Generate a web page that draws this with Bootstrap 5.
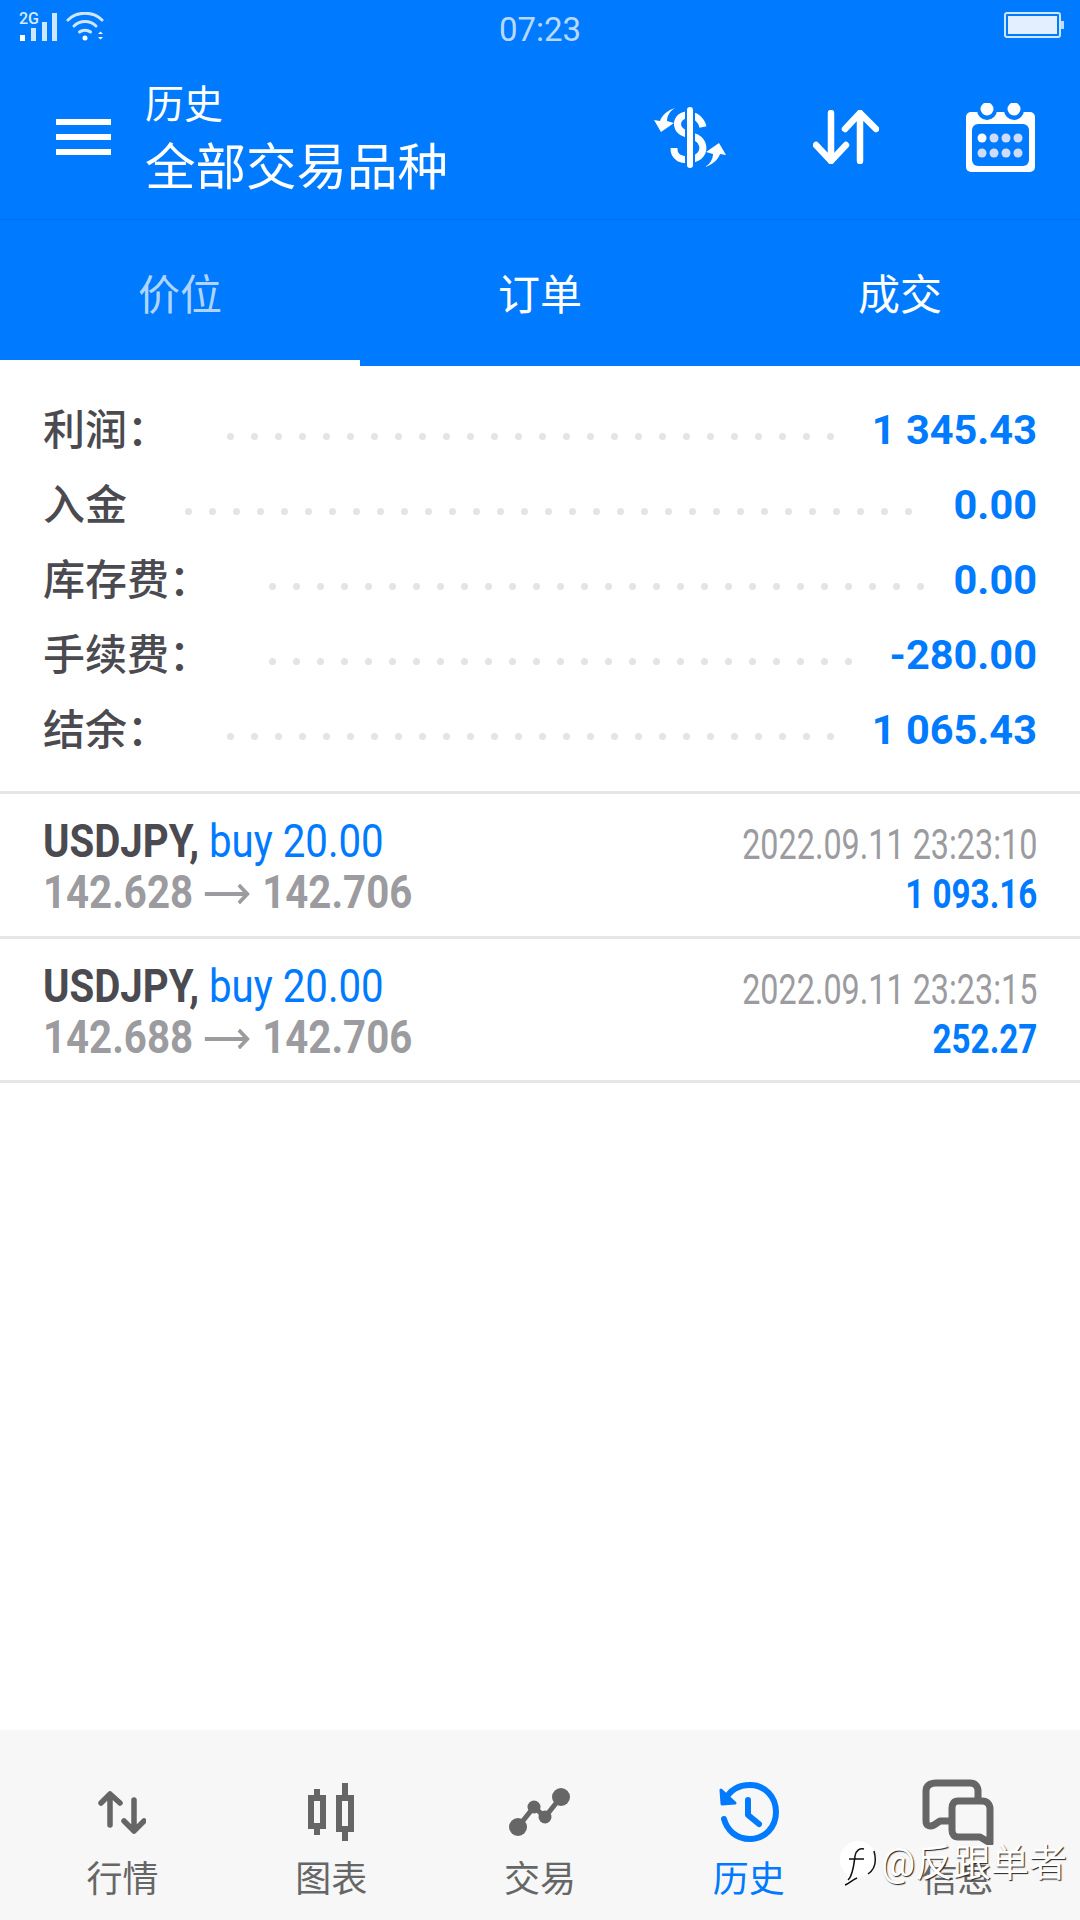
<!DOCTYPE html>
<html lang="zh-CN">
<head>
    <meta charset="UTF-8">
    <meta name="viewport" content="width=device-width, initial-scale=1.0">
    <title>历史</title>
    <link href="https://cdn.jsdelivr.net/npm/bootstrap@5.3.0/dist/css/bootstrap.min.css" rel="stylesheet">
    <style>
        body {
            width: 1080px;
            min-height: 1920px;
            font-family: Roboto, "Noto Sans CJK SC", sans-serif;
            color: #4a4a50;
            background: #fff;
        }
        .top-area { background: #007aff; color: #fff; }
        .status-line { height: 60px; padding: 12px 16px 0 18px; }
        .signal-icon { margin-top: -4px; }
        .clock-text { font-size: 33px; line-height: 36px; color: rgba(255, 255, 255, .72); }
        .app-line { height: 160px; padding-left: 56px; padding-bottom: 5px; border-bottom: 1px solid #0070ea; }
        .burger-bars { width: 55px; height: 36px; margin-right: 34px; }
        .burger-bars span { display: block; height: 6px; background: #fff; }
        .title-box { padding-top: 8px; }
        .title-small { font-size: 39px; line-height: 44px; }
        .title-big { font-size: 50.500px; line-height: 62px; margin-top: 10px; }
        .act-swap { margin-left: 87px; }
        .act-cal { margin: 0 45px 0 87px; }
        .tab-line { height: 146px; }
        .tab-line .nav-link {
            color: #fff;
            font-size: 42px;
            line-height: 50px;
            height: 146px;
            padding: 51px 0 0;
            border-bottom: 6px solid transparent;
        }
        .tab-line .nav-link.is-current { color: rgba(255, 255, 255, .7); border-bottom-color: #fff; }
        .sum-box { padding: 27px 43px 23px; }
        .sum-row { height: 75px; }
        .sum-label { font-size: 42px; font-weight: 500; color: #4a4a50; line-height: 75px; white-space: nowrap; }
        .sum-dots { display: flex; gap: 17px; margin-left: 58px; padding-top: 12px; }
        .sum-dots i { width: 7px; height: 7px; border-radius: 50%; background: #e4e4e6; }
        .sum-value { font-size: 41.500px; font-weight: 700; color: #007aff; line-height: 75px; margin-top: -2px; }
        .deal-row {
            height: 144.500px;
            padding: 0 43px;
            border-top: 3px solid #e6e6e6;
        }
        .deal-list { border-bottom: 3px solid #e6e6e6; }
        .squeeze-l, .squeeze-r { display: block; white-space: nowrap; }
        .squeeze-l { transform: scaleX(.855); transform-origin: left center; }
        .squeeze-r { transform: scaleX(.77); transform-origin: right center; text-align: right; }
        .deal-main { font-size: 47px; line-height: 51px; font-weight: 700; color: #4a4a50; }
        .deal-main em { font-style: normal; font-weight: 400; color: #007aff; }
        .deal-price { color: #9b9ba0; }
        .deal-arrow { margin: 0 14px; vertical-align: 4px; }
        .deal-date { font-size: 42px; line-height: 48px; color: #9b9ba0; margin-top: 10px; }
        .deal-money { font-size: 40px; line-height: 50px; font-weight: 700; color: #007aff; margin-top: 1px; }
        .deal-money.squeeze-r { transform: scaleX(.83); }
        .deal-left { padding-top: 21px; }
        .deal-right { padding-top: 17px; }
        .tab-bar {
            height: 190px;
            padding: 49px 18px 0;
            background: #f7f7f7;
            position: relative;
        }
        .tab-cell { width: 209px; color: #666; font-size: 36px; line-height: 44px; }
        .tab-cell.on { color: #007aff; }
        .tab-icon { height: 66px; margin-bottom: 13px; }
        .mark-box {
            position: absolute;
            left: 839px;
            top: 110px;
            height: 46px;
            color: #fff;
            font-size: 38px;
            line-height: 46px;
            text-shadow: 1px 1px 1px #222;
            white-space: nowrap;
        }
    </style>
</head>
<body class="d-flex flex-column">
    <div class="top-area">
        <div class="status-line d-flex align-items-start position-relative">
            <svg class="signal-icon" width="40" height="34" viewBox="0 -4 40 34">
                <text x="1" y="12" font-family="Roboto" font-size="16" font-weight="500" fill="#dcecff">2G</text>
                <rect x="2" y="23" width="5" height="6" fill="#fff"/>
                <rect x="13" y="16" width="5" height="13" fill="#cfe6ff"/>
                <rect x="24" y="10" width="5" height="19" fill="#cfe6ff"/>
                <rect x="34" y="1" width="5" height="28" fill="#cfe6ff"/>
            </svg>
            <svg class="ms-2" width="40" height="30" viewBox="0 0 40 30" fill="none" stroke="#cfe6ff" stroke-width="3" stroke-linecap="round">
                <path d="M2 8C11 -1 27 -1 36 8"/>
                <path d="M8 14C14 8 24 8 30 14"/>
                <path d="M13.500 20C16.500 17.500 21.500 17.500 24.500 20"/>
                <circle cx="19" cy="26" r="2.500" fill="#fff" stroke="none"/>
                <path d="M32 22l2.500-2.500 2.500 2.500zM32 25l2.500 2.500 2.500-2.500z" fill="#fff" stroke="none"/>
            </svg>
            <div class="clock-text position-absolute top-50 start-50 translate-middle">07:23</div>
            <svg class="ms-auto" width="60" height="26" viewBox="0 0 60 26">
                <rect x="1" y="1" width="55" height="24" rx="2" fill="none" stroke="#cfe6ff" stroke-width="2"/>
                <rect x="4" y="4" width="49" height="18" fill="#e3efff"/>
                <rect x="57" y="9" width="3" height="8" fill="#bcdcff"/>
            </svg>
        </div>
        <div class="app-line d-flex align-items-center">
            <div class="burger-bars d-flex flex-column justify-content-between"><span></span><span></span><span></span></div>
            <div class="title-box flex-grow-1">
                <div class="title-small">历史</div>
                <div class="title-big">全部交易品种</div>
            </div>
            <svg width="72" height="61" viewBox="0 0 72 61">
                <path d="M49 20C47 12 41 8 34 8C26 8 22 14 24 20C26 27 37 28 43 31C50 35 50 43 47 47C43 53 31 54 25 51C21 48 20 46 20 41" fill="none" stroke="#fff" stroke-width="7"/>
                <rect x="31" y="0" width="10" height="61" fill="#007aff"/>
                <rect x="33" y="0" width="6" height="61" rx="3" fill="#fff"/>
                <path d="M21 1C16 4 13 9 13 14L20 16L7 25L0 13L6 14C8 8 14 3 21 1Z" fill="#fff"/>
                <path d="M21 1C16 4 13 9 13 14L20 16L7 25L0 13L6 14C8 8 14 3 21 1Z" fill="#fff" transform="rotate(180 36 30.500)"/>
            </svg>
            <svg class="act-swap" width="66" height="54" viewBox="0 0 66 54" fill="none" stroke="#fff" stroke-width="6.500" stroke-linecap="round" stroke-linejoin="round">
                <path d="M18 3V51M3 35L18 51L33 35"/>
                <path d="M47 51V3M32 19L47 3L63 19"/>
            </svg>
            <svg class="act-cal flex-shrink-0" width="69" height="69" viewBox="0 0 69 69">
                <rect x="0" y="9" width="69" height="60" rx="5" fill="#fff"/>
                <circle cx="21" cy="7" r="10" fill="#007aff"/>
                <circle cx="48" cy="7" r="10" fill="#007aff"/>
                <circle cx="21" cy="6" r="6.500" fill="#fff"/>
                <circle cx="48" cy="6" r="6.500" fill="#fff"/>
                <rect x="6" y="21" width="57" height="42" rx="6" fill="#007aff"/>
                <g fill="#cfdcf5">
                    <circle cx="16" cy="35" r="4.500" fill="#fff"/><circle cx="28" cy="35" r="4.500"/><circle cx="40" cy="35" r="4.500"/><circle cx="52" cy="35" r="4.500"/>
                    <circle cx="16" cy="50" r="4.500"/><circle cx="28" cy="50" r="4.500"/><circle cx="40" cy="50" r="4.500"/><circle cx="52" cy="50" r="4.500"/>
                </g>
            </svg>
        </div>
        <nav class="tab-line nav nav-fill">
            <a class="nav-link is-current" href="#">价位</a>
            <a class="nav-link" href="#">订单</a>
            <a class="nav-link" href="#">成交</a>
        </nav>
    </div>

    <main class="flex-grow-1">
        <div class="sum-box" id="sumBox"></div>
        <div class="deal-list">
            <div class="deal-row d-flex justify-content-between">
                <div class="deal-left">
                    <div class="squeeze-l deal-main">USDJPY, <em>buy 20.00</em></div>
                    <div class="squeeze-l deal-main deal-price">142.628<svg class="deal-arrow" width="53" height="20" viewBox="0 0 53 20" fill="none" stroke="#9b9ba0" stroke-width="4"><path d="M0 10H50M40 1L50 10L40 19"/></svg>142.706</div>
                </div>
                <div class="deal-right">
                    <div class="squeeze-r deal-date">2022.09.11 23:23:10</div>
                    <div class="squeeze-r deal-money">1 093.16</div>
                </div>
            </div>
            <div class="deal-row d-flex justify-content-between">
                <div class="deal-left">
                    <div class="squeeze-l deal-main">USDJPY, <em>buy 20.00</em></div>
                    <div class="squeeze-l deal-main deal-price">142.688<svg class="deal-arrow" width="53" height="20" viewBox="0 0 53 20" fill="none" stroke="#9b9ba0" stroke-width="4"><path d="M0 10H50M40 1L50 10L40 19"/></svg>142.706</div>
                </div>
                <div class="deal-right">
                    <div class="squeeze-r deal-date">2022.09.11 23:23:15</div>
                    <div class="squeeze-r deal-money">252.27</div>
                </div>
            </div>
        </div>
    </main>

    <div class="tab-bar d-flex">
        <div class="tab-cell d-flex flex-column align-items-center">
            <div class="tab-icon d-flex align-items-center">
                <svg width="48" height="43" viewBox="0 0 48 43" fill="none" stroke="#666" stroke-width="5.500" stroke-linecap="round" stroke-linejoin="round">
                    <path d="M12 34V3M3 12L12 3L22 12"/>
                    <path d="M36 9V40M26 30L36 40L46 30"/>
                </svg>
            </div>
            <div>行情</div>
        </div>
        <div class="tab-cell d-flex flex-column align-items-center">
            <div class="tab-icon d-flex align-items-center">
                <svg width="47" height="58" viewBox="0 0 47 58">
                    <rect x="6" y="6" width="6" height="46" fill="#666"/>
                    <rect x="0" y="12" width="18" height="34" fill="#666"/>
                    <rect x="6" y="18" width="6" height="22" fill="#f7f7f7"/>
                    <rect x="34" y="0" width="6" height="58" fill="#666"/>
                    <rect x="28" y="12" width="18" height="37" fill="#666"/>
                    <rect x="34" y="18" width="6" height="25" fill="#f7f7f7"/>
                </svg>
            </div>
            <div>图表</div>
        </div>
        <div class="tab-cell d-flex flex-column align-items-center">
            <div class="tab-icon d-flex align-items-center">
                <svg width="61" height="48" viewBox="0 0 61 48">
                    <path d="M9 39L25 19L36 29L52 9" fill="none" stroke="#666" stroke-width="5"/>
                    <circle cx="9" cy="39" r="9" fill="#666"/>
                    <circle cx="25" cy="19" r="6.500" fill="#666"/>
                    <circle cx="36" cy="29" r="6.500" fill="#666"/>
                    <circle cx="52" cy="9" r="9" fill="#666"/>
                </svg>
            </div>
            <div>交易</div>
        </div>
        <div class="tab-cell on d-flex flex-column align-items-center">
            <div class="tab-icon d-flex align-items-center">
                <svg width="60" height="60" viewBox="0 0 60 60" fill="none" stroke="#007aff" stroke-width="6" stroke-linecap="round" stroke-linejoin="round">
                    <path d="M6 18C11 8 20 3 31 3C46 3 57 15 57 30C57 45 46 57 31 57C17 57 8 48 5 37"/>
                    <path d="M2 8L3 22L16 21Z" fill="#007aff" stroke-width="3"/>
                    <path d="M29 18V33L40 42"/>
                </svg>
            </div>
            <div>历史</div>
        </div>
        <div class="tab-cell d-flex flex-column align-items-center">
            <div class="tab-icon d-flex align-items-start">
                <svg width="72" height="66" viewBox="0 0 72 66" fill="none" stroke="#666" stroke-width="7" stroke-linejoin="round">
                    <path d="M56 20V12C56 7 53 4 48 4H14C8 4 4 7 4 12V42C4 47 8 48 12 46L18 42H30"/>
                    <path d="M36 22H60C65 22 68 25 68 30V64L58 58H36C32 58 30 55 30 51V29C30 25 32 22 36 22Z"/>
                </svg>
            </div>
            <div>信息</div>
        </div>
        <div class="mark-box d-flex align-items-center gap-1">
            <svg width="38" height="46" viewBox="0 0 38 46">
                <path d="M19 1C29 1 37 9 37 19C37 30 28 37 18 37C11 42 9 44 6 45C9 41 9 37 8 34C3 31 1 25 1 19C1 9 9 1 19 1Z" fill="#fff"/>
                <path d="M9 40C14 36 15 24 16 16C17 10 21 8 25 9M10 19H25M29 34C35 30 38 22 35 11M6 45C10 44 13 40 18 38" fill="none" stroke="#111" stroke-width="1.500"/>
            </svg>
            <span>@反跟单者</span>
        </div>
    </div>

    <script>
        const sumRows = [
            { label: "利润：", dots: 26, value: "1 345.43" },
            { label: "入金", dots: 31, value: "0.00" },
            { label: "库存费：", dots: 28, value: "0.00" },
            { label: "手续费：", dots: 25, value: "-280.00" },
            { label: "结余：", dots: 26, value: "1 065.43" }
        ];

        document.getElementById('sumBox').innerHTML = sumRows.map(r => `
            <div class="sum-row d-flex align-items-center">
                <div class="sum-label">${r.label}</div>
                <div class="sum-dots">${'<i></i>'.repeat(r.dots)}</div>
                <div class="sum-value ms-auto">${r.value}</div>
            </div>`).join('');
    </script>
    <script src="https://cdn.jsdelivr.net/npm/bootstrap@5.3.0/dist/js/bootstrap.bundle.min.js"></script>
</body>
</html>
